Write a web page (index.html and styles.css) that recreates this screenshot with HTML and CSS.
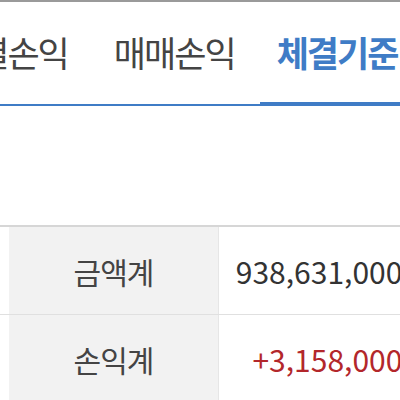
FILE: index.html
```html
<!DOCTYPE html>
<html lang="ko">
<head>
<meta charset="utf-8">
<link rel="stylesheet" href="styles.css">
</head>
<body>
<div class="page">
  <nav class="tabs">
    <div class="tab first">체결손익</div>
    <div class="tab">매매손익</div>
    <div class="tab active">체결기준</div>
  </nav>
  <div class="spacer"></div>
  <div class="table">
    <div class="row">
      <div class="label">금액계</div>
      <div class="value">938,631,000원</div>
    </div>
    <div class="row">
      <div class="label">손익계</div>
      <div class="value plus">+3,158,000원</div>
    </div>
  </div>
</div>
</body>
</html>
```
FILE: styles.css
```css
html, body {
  margin: 0;
  padding: 0;
  background: #fff;
  overflow: hidden;
}
.page {
  width: 400px;
  height: 400px;
  overflow: hidden;
  border-top: 2px solid #9a9a9a;
  box-sizing: border-box;
  font-family: "Noto Sans CJK KR", "Noto Sans", sans-serif;
}
.tabs {
  display: flex;
  height: 103px;
  box-sizing: border-box;
  border-bottom: 2px solid #3f7cc6;
  margin-top: 1px;
  white-space: nowrap;
}
.tab {
  font-size: 35px;
  letter-spacing: -2px;
  color: #444;
  padding-top: 30px;
  margin-right: 46px;
  line-height: 1.1;
  box-sizing: border-box;
}
.tab.first {
  margin-left: -53px;
}
.tab.active {
  color: #3f7cc6;
  font-weight: 700;
  margin-left: -21px;
  padding-left: 17px;
  border-bottom: 4px solid #3f7cc6;
  margin-bottom: -2px;
  flex: 1;
  margin-right: 0;
}
.spacer {
  height: 119px;
}
.table {
  width: 430px;
  border-top: 2px solid #d6d6d6;
}
.row {
  display: flex;
  height: 87px;
  border-bottom: 1px solid #e0e0e0;
}
.label {
  margin-left: 9px;
  width: 209px;
  background: #f2f2f2;
  border-right: 1px solid #e6e6e6;
  display: flex;
  align-items: center;
  justify-content: center;
  font-size: 30px;
  letter-spacing: -1px;
  color: #444;
}
.value {
  flex: 1;
  display: flex;
  align-items: center;
  justify-content: flex-end;
  font-size: 30px;
  color: #333;
  white-space: nowrap;
}
.value.plus {
  color: #b3272b;
}
```
